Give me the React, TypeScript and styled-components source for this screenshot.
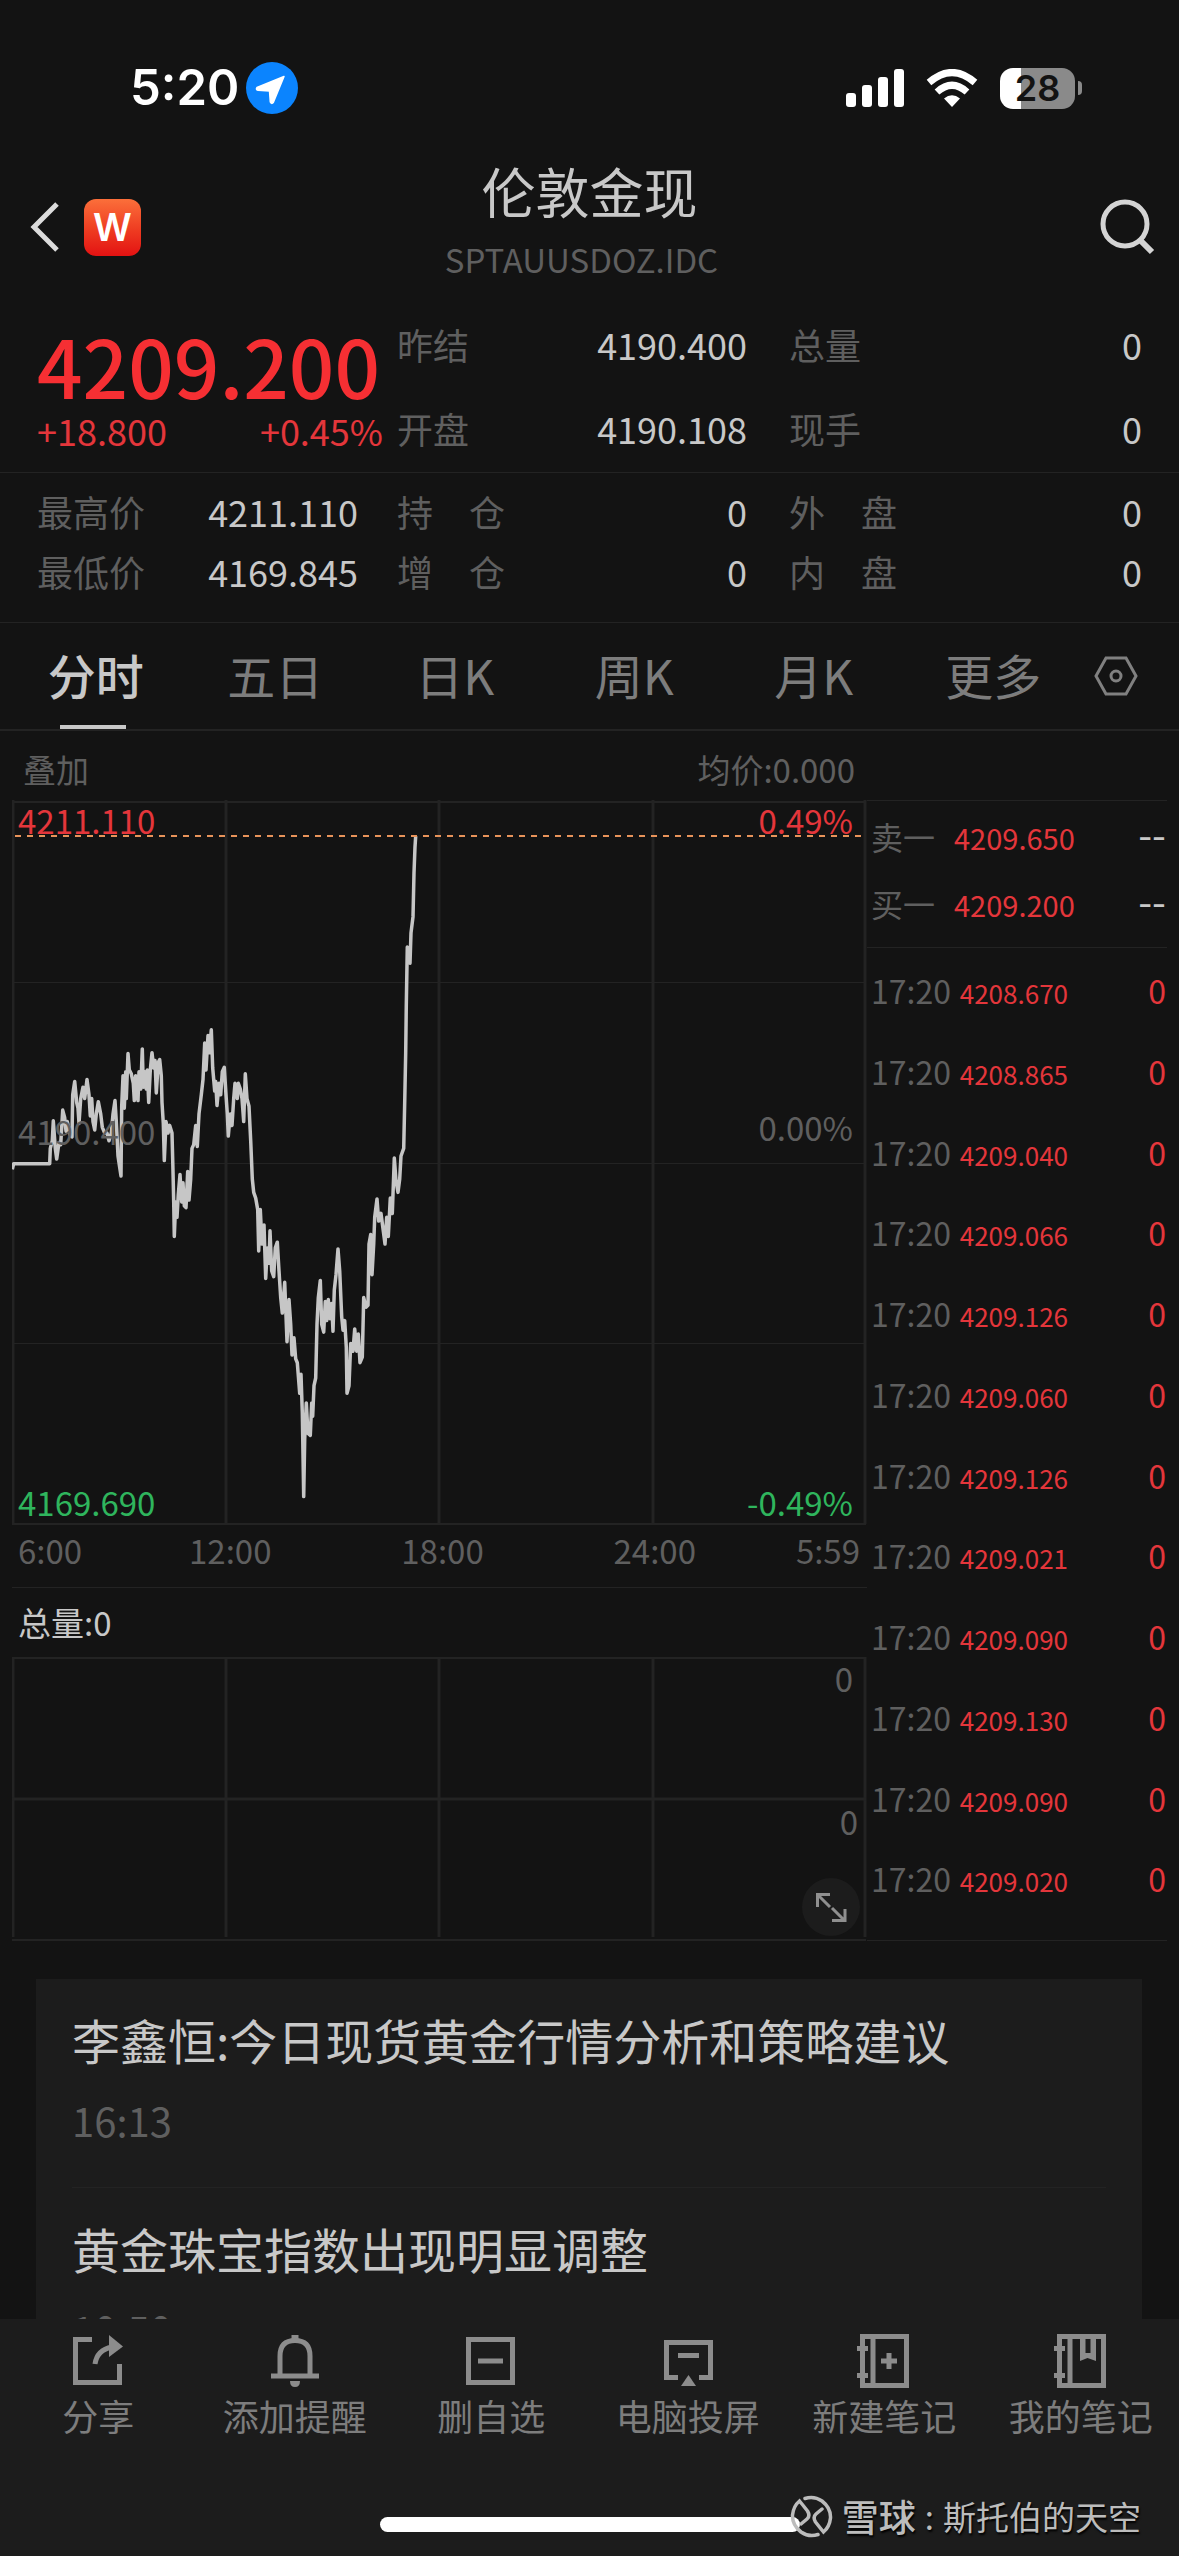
import React from "react";
import styled, { createGlobalStyle } from "styled-components";

const color = {
  page: "#131313",
  panel: "#1c1c1c",
  line: "#232323",
  text: "#c8c8c8",
  muted: "#5f5f5f",
  tab: "#7d7d7d",
  icon: "#8c8c8c",
  up: "#e4363b",
  upStrong: "#f62f33",
  down: "#2fb55d",
  latest: "#e8935a",
};

const GlobalStyle = createGlobalStyle`
  *, *::before, *::after { box-sizing: border-box; }
  body {
    margin: 0;
    background: ${color.page};
    color: ${color.text};
    font-family: "Noto Sans CJK SC", "Noto Sans", sans-serif;
  }
  button {
    appearance: none;
    border: 0;
    margin: 0;
    padding: 0;
    background: none;
    color: inherit;
    font: inherit;
    cursor: pointer;
  }
  h1, h2, p, dl, dt, dd, ul { margin: 0; padding: 0; font-weight: 400; }
  svg { display: block; }
`;

const Screen = styled.div`
  display: flex;
  flex-direction: column;
  height: 100vh;
  overflow: hidden;
`;

const Content = styled.main`
  flex: 1;
  min-height: 0;
  overflow: hidden;
`;

/* ---------- status bar ---------- */

const StatusBar = styled.div`
  display: flex;
  align-items: center;
  justify-content: space-between;
  height: 152px;
  padding: 24px 97px 0 130px;
  font-family: Inter, sans-serif;
  color: #fff;
`;

const StatusGroup = styled.div<{ $gap: number }>`
  display: flex;
  align-items: center;
  gap: ${(p) => p.$gap}px;
`;

const Clock = styled.span`
  font-size: 49px;
  line-height: 56px;
  font-weight: 600;
`;

const Battery = styled.div`
  display: flex;
  align-items: center;
  gap: 3px;
  &::after {
    content: "";
    width: 4px;
    height: 14px;
    border-radius: 0 4px 4px 0;
    background: #8a8a8a;
  }
`;

const BatteryLevel = styled.span`
  width: 75px;
  height: 41px;
  border-radius: 13px;
  background: linear-gradient(90deg, #fff 28%, #8a8a8a 28%);
  color: #131313;
  font-size: 36px;
  line-height: 41px;
  font-weight: 600;
  text-align: center;
`;

/* ---------- title bar ---------- */

const TitleBar = styled.header`
  display: grid;
  grid-template-columns: 1fr auto 1fr;
  align-items: center;
  height: 150px;
  padding: 0 24px;
`;

const BackGroup = styled.div`
  display: flex;
  align-items: center;
  gap: 24px;
  padding-left: 6px;
`;

const AppBadge = styled.span`
  display: flex;
  align-items: center;
  justify-content: center;
  width: 57px;
  height: 57px;
  border-radius: 12px;
  background: linear-gradient(#fb6f3a, #ee3b21 55%, #e31212);
  color: #fff;
  font: 600 38px/57px Inter, sans-serif;
`;

const TitleBlock = styled.div`
  padding-bottom: 12px;
  text-align: center;
`;

const Title = styled.h1`
  font-size: 54px;
  line-height: 64px;
`;

const Symbol = styled.p`
  margin-top: 12px;
  padding-right: 16px;
  color: ${color.muted};
  font-size: 33px;
  line-height: 48px;
`;

const SearchButton = styled.button`
  justify-self: end;
`;

/* ---------- quote figures ---------- */

const Figures = styled.section<{ $pad: string }>`
  display: grid;
  grid-template-columns: minmax(0, 360fr) minmax(0, 392fr) minmax(0, 353fr);
  padding: ${(p) => p.$pad};
  border-bottom: 1px solid ${color.line};
`;

const FigureColumn = styled.dl<{ $row: number; $inset: number }>`
  padding-right: ${(p) => p.$inset}px;
  font-size: 36px;
  line-height: ${(p) => p.$row}px;
`;

const Figure = styled.div`
  display: flex;
  justify-content: space-between;
  white-space: pre;
  dt { color: ${color.muted}; }
`;

const PriceBlock = styled.div`
  padding: 20px 14px 0 0;
`;

const Price = styled.p`
  color: ${color.upStrong};
  font-size: 80px;
  line-height: 84px;
  font-weight: 500;
`;

const Change = styled.p`
  display: flex;
  justify-content: space-between;
  color: ${color.up};
  font-size: 36px;
  line-height: 48px;
`;

/* ---------- period tabs ---------- */

const Tabs = styled.nav`
  display: flex;
  align-items: stretch;
  height: 108px;
  padding: 0 30px 0 6px;
  border-bottom: 2px solid ${color.line};
`;

const Tab = styled.button<{ $active?: boolean }>`
  position: relative;
  flex: 1;
  padding-bottom: 5px;
  color: ${(p) => (p.$active ? color.text : color.tab)};
  font-size: 48px;
  font-weight: ${(p) => (p.$active ? 500 : 400)};
  &::after {
    content: "";
    position: absolute;
    bottom: 0;
    left: calc(50% - 36px);
    width: 66px;
    height: 4px;
    background: ${(p) => (p.$active ? color.text : "transparent")};
  }
`;

const TabSettings = styled.button`
  display: flex;
  align-items: center;
  justify-content: center;
  width: 66px;
`;

/* ---------- charts and order book ---------- */

const Market = styled.section`
  display: grid;
  grid-template-columns: minmax(0, 855fr) minmax(0, 300fr);
  padding: 0 12px;
`;

const Legend = styled.div<{ $bright?: boolean }>`
  display: flex;
  justify-content: space-between;
  height: 69px;
  padding: ${(p) => (p.$bright ? "0 12px 0 6px" : "4px 12px 0 11px")};
  color: ${(p) => (p.$bright ? color.text : color.muted)};
  font-size: 33px;
  line-height: 68px;
`;

const Plot = styled.div<{ $height: number }>`
  position: relative;
  height: ${(p) => p.$height}px;
`;

const PlotCanvas = styled.svg`
  width: 100%;
  height: 100%;
`;

const AxisLabel = styled.span<{ $top: number; $side: "left" | "right"; $inset: number; $tone: string }>`
  position: absolute;
  top: ${(p) => p.$top}px;
  ${(p) => p.$side}: ${(p) => p.$inset}px;
  color: ${(p) => p.$tone};
  font-size: 33px;
  line-height: 40px;
`;

const TimeAxis = styled.div`
  display: grid;
  grid-template-columns: 1fr 2fr 2fr 2fr 1fr;
  height: 63px;
  padding-left: 6px;
  border-bottom: 1px solid ${color.line};
  color: ${color.muted};
  font-size: 33px;
  line-height: 50px;
  text-align: center;
  white-space: nowrap;
  span:first-child { text-align: left; }
  span:last-child {
    justify-self: end;
    padding-right: 7px;
  }
`;

const ExpandButton = styled.button`
  position: absolute;
  right: 7px;
  bottom: 5px;
  width: 58px;
  height: 58px;
  border-radius: 50%;
  background: ${color.panel};
`;

const Book = styled.aside`
  display: flex;
  flex-direction: column;
  margin-top: 69px;
  border-top: 1px solid ${color.line};
  border-bottom: 1px solid ${color.line};
`;

const BookSection = styled.div<{ $pad: string; $ruled?: boolean }>`
  padding: ${(p) => p.$pad};
  border-bottom: ${(p) => (p.$ruled ? `1px solid ${color.line}` : "0")};
`;

const BookTable = styled.table<{ $height: number; $row: number; $price: number }>`
  width: 100%;
  height: ${(p) => p.$height}px;
  table-layout: fixed;
  border-collapse: collapse;
  font-size: 32px;
  line-height: ${(p) => p.$row}px;
  th, td {
    padding: 0;
    font-weight: 400;
    vertical-align: baseline;
    text-align: right;
    white-space: nowrap;
  }
  th {
    padding-left: 4px;
    color: ${color.muted};
    text-align: left;
  }
  td {
    color: ${color.up};
    font-size: ${(p) => p.$price}px;
  }
  td:last-child {
    padding-right: 1px;
    font-size: 32px;
  }
`;

const BookColumn = styled.col<{ $share: number }>`
  width: ${(p) => p.$share}%;
`;

const Unfilled = styled.span`
  color: ${color.text};
  font-size: 40px;
  line-height: 40px;
`;

/* ---------- news ---------- */

const News = styled.ul`
  margin: 38px 37px 0 36px;
  padding: 0 36px;
  background: ${color.panel};
  list-style: none;
`;

const NewsItem = styled.li`
  padding: 28px 0 42px;
  border-bottom: 1px solid #232323;
`;

const NewsTitle = styled.h2`
  font-size: 48px;
  line-height: 64px;
`;

const NewsTime = styled.p`
  margin-top: 24px;
  color: ${color.muted};
  font-size: 40px;
  line-height: 50px;
`;

/* ---------- bottom bar ---------- */

const BottomBar = styled.footer`
  position: relative;
  display: flex;
  flex-direction: column;
  justify-content: space-between;
  height: 237px;
  padding: 14px 0 24px;
  background: ${color.panel};
`;

const Actions = styled.div`
  display: grid;
  grid-template-columns: repeat(6, minmax(0, 1fr));
`;

const Action = styled.button`
  display: flex;
  flex-direction: column;
  align-items: center;
  gap: 4px;
  color: ${color.tab};
  font-size: 36px;
  line-height: 44px;
  white-space: nowrap;
`;

const HomeIndicator = styled.div`
  align-self: center;
  width: 420px;
  height: 15px;
  border-radius: 8px;
  background: #fff;
`;

const Watermark = styled.div`
  position: absolute;
  right: 38px;
  bottom: 15px;
  display: flex;
  align-items: center;
  gap: 9px;
  color: #bcbcbc;
  font-size: 33px;
  line-height: 50px;
  text-shadow: 1px 2px 2px #000;
`;

const Brand = styled.strong`
  font-size: 37px;
  font-weight: 500;
`;

/* ---------- icons ---------- */

const LocationIcon = () => (
  <svg width="52" height="52" viewBox="0 0 52 52" aria-hidden="true">
    <circle cx="26" cy="26" r="26" fill="#0b84fe" />
    <path d="M38 14.5 L11 25.5 Q9.500 27.500 12 28.300 L23.500 29 L24.300 40 Q25.500 42.500 27.300 40.500 Z" fill="#fff" stroke="#fff" strokeWidth="1.500" strokeLinejoin="round" />
  </svg>
);

const SignalIcon = () => (
  <svg width="58" height="38" viewBox="0 0 58 38" fill="#fff" aria-hidden="true">
    <rect x="0" y="24" width="10" height="14" rx="3" />
    <rect x="16" y="16" width="10" height="22" rx="3" />
    <rect x="32" y="8" width="10" height="30" rx="3" />
    <rect x="48" y="0" width="10" height="38" rx="3" />
  </svg>
);

const WifiIcon = () => (
  <svg width="52" height="38" viewBox="0 0 52 38" fill="none" stroke="#fff" strokeWidth="7" aria-hidden="true">
    <path d="M3 13.500 Q26 -6.500 49 13.500" />
    <path d="M11 23 Q26 9.500 41 23" />
    <path d="M26 38 L18 29.500 Q26 23 34 29.500 Z" fill="#fff" stroke="none" />
  </svg>
);

const BackIcon = () => (
  <svg width="30" height="50" viewBox="0 0 30 50" fill="none" stroke="#dcdcdc" strokeWidth="5" aria-hidden="true">
    <path d="M27 2 L4 25 L27 48" />
  </svg>
);

const SearchIcon = () => (
  <svg width="56" height="56" viewBox="0 0 56 56" fill="none" stroke="#d4d4d4" strokeWidth="5" aria-hidden="true">
    <circle cx="26" cy="25" r="22" />
    <path d="M41 41 L53 53" strokeWidth="6" />
  </svg>
);

const HexIcon = () => (
  <svg width="44" height="40" viewBox="0 0 44 40" fill="none" stroke="#808080" strokeWidth="3" aria-hidden="true">
    <path d="M12 2 H32 L42 20 L32 38 H12 L2 20 Z" />
    <circle cx="22" cy="20" r="5" />
  </svg>
);

const ExpandIcon = () => (
  <svg width="58" height="58" viewBox="0 0 58 58" fill="none" stroke="#8f8f8f" strokeWidth="3" aria-hidden="true">
    <path d="M15.500 29 V16.500 H28 M16 17 L28 29 M43 31 V42.500 H30 M30 30 L42 42" />
  </svg>
);

const ActionIcon = ({ children }: { children: React.ReactNode }) => (
  <svg width="56" height="56" viewBox="0 0 56 56" fill="none" stroke={color.icon} strokeWidth="5" aria-hidden="true">
    {children}
  </svg>
);

const NotebookFrame = () => (
  <>
    <rect x="6.500" y="3.500" width="44" height="49" />
    <path d="M17 4 V52" />
    <path d="M1 15.500 H12 M1 42.500 H12" />
  </>
);

const actions = [
  {
    label: "分享",
    icon: (
      <>
        <path d="M22 6.500 H5.500 V49.500 H49.500 V31" />
        <path d="M25 31 Q27 17 42 14" />
        <path d="M39 2 L53 13.500 L39 24 Z" fill={color.icon} stroke="none" />
      </>
    ),
  },
  {
    label: "添加提醒",
    icon: (
      <>
        <path d="M13 43 V23 Q13 7.500 28 7.500 Q43 7.500 43 23 V43" />
        <path d="M4 43 H52" />
        <path d="M28 2 V8" strokeWidth="7" />
        <path d="M23 48 H33 Q33 54 28 54 Q23 54 23 48 Z" fill={color.icon} stroke="none" />
      </>
    ),
  },
  {
    label: "删自选",
    icon: (
      <>
        <rect x="5.500" y="6.500" width="44" height="43" />
        <path d="M15 28 H40" />
      </>
    ),
  },
  {
    label: "电脑投屏",
    icon: (
      <>
        <path d="M18 44.500 H6.500 V9.500 H50.500 V44.500 H39" />
        <path d="M18 22.500 H39" />
        <path d="M28.500 42 L36 53 H21 Z" fill={color.icon} stroke="none" />
      </>
    ),
  },
  {
    label: "新建笔记",
    icon: (
      <>
        <NotebookFrame />
        <path d="M25 28 H41 M33 20 V36" />
      </>
    ),
  },
  {
    label: "我的笔记",
    icon: (
      <>
        <NotebookFrame />
        <path d="M27 4 V28 L34.500 25 L43 28 V4 H37.500 V20 H32.500 V4 Z" fill={color.icon} stroke="none" />
      </>
    ),
  },
];

const XueqiuLogo = () => (
  <svg width="43" height="43" viewBox="0 0 43 43" fill="none" stroke="#bcbcbc" strokeWidth="3.500" strokeLinecap="round" aria-hidden="true">
    <path d="M15 3.500 Q24 0.500 32 6 Q41 13 40.500 23 Q39.500 32 33.500 37 Q31 34 25.500 27 Q22.500 22 26 19 L32 14" />
    <path d="M28 39.500 Q19 42.500 11 37 Q2 30 2.500 20 Q3.500 11 9.500 6 Q12 9 17.500 16 Q20.500 21 17 24 L11 29" />
  </svg>
);

/* ---------- price line ---------- */

/* Time runs 3 units per pixel from the left axis, price about 2.6 units per pixel below the first quarter line. */
const samples: [number, number][] = [
  [-2, 495], [2, 480], [110, 480], [112, 440], [118, 420], [121, 368], [127, 440], [131, 468], [138, 425], [143, 430],
  [149, 340], [155, 360], [159, 395], [163, 370], [172, 405], [177, 410], [179, 300], [185, 265], [191, 320], [195, 335],
  [198, 375], [203, 310], [210, 280], [215, 310], [222, 260], [228, 300], [232, 355], [236, 310], [240, 370], [245, 392],
  [250, 350], [256, 318], [263, 350], [268, 385], [275, 400], [282, 400], [288, 420], [295, 400], [300, 350], [306, 315],
  [310, 370], [315, 460], [320, 490], [324, 512], [326, 330], [330, 250], [334, 335], [338, 240], [340, 310], [345, 192],
  [349, 235], [355, 245], [361, 270], [364, 315], [368, 250], [375, 315], [378, 240], [383, 285], [388, 180], [391, 280],
  [395, 240], [400, 285], [403, 235], [407, 320], [412, 235], [417, 190], [422, 230], [426, 210], [430, 295], [436, 215],
  [440, 208], [445, 250], [447, 320], [451, 375], [454, 472], [459, 370], [465, 400], [470, 380], [477, 400], [480, 500],
  [482, 580], [484, 670], [488, 580], [492, 620], [496, 560], [501, 508], [506, 580], [510, 530], [514, 590], [519, 595],
  [524, 500], [528, 575], [533, 520], [537, 440], [542, 430], [548, 380], [553, 435], [558, 350], [565, 300], [570, 260],
  [575, 165], [579, 235], [585, 145], [589, 190], [595, 130], [599, 230], [605, 290], [608, 265], [612, 328], [618, 270],
  [623, 300], [628, 240], [634, 228], [639, 300], [643, 350], [646, 408], [652, 350], [657, 380], [662, 310], [666, 270],
  [673, 310], [676, 270], [682, 285], [687, 310], [692, 370], [697, 245], [702, 310], [708, 330], [713, 420], [718, 520],
  [722, 555], [728, 570], [734, 600], [737, 708], [742, 600], [747, 690], [753, 640], [758, 780], [763, 700], [768, 740],
  [771, 655], [776, 760], [782, 775], [787, 700], [793, 685], [798, 760], [803, 830], [808, 870], [815, 790], [822, 945],
  [828, 835], [833, 900], [837, 980], [843, 935], [848, 990], [853, 1000], [860, 1080], [864, 1030], [868, 1130], [872, 1350],
  [875, 1200], [880, 1105], [885, 1185], [892, 1190], [896, 1105], [899, 1140], [903, 1060], [908, 1040], [912, 900], [916, 830],
  [922, 785], [926, 900], [932, 920], [937, 840], [941, 890], [946, 835], [951, 885], [956, 845], [960, 918], [964, 810],
  [969, 770], [975, 703], [980, 760], [986, 880], [990, 915], [995, 890], [1000, 960], [1002, 1080], [1008, 1060], [1013, 950],
  [1020, 970], [1025, 912], [1031, 970], [1036, 925], [1041, 1000], [1048, 985], [1052, 830], [1059, 855], [1065, 850], [1068, 690],
  [1073, 665], [1077, 770], [1082, 690], [1085, 620], [1092, 572], [1097, 630], [1104, 610], [1110, 650], [1116, 690], [1121, 620],
  [1126, 670], [1132, 570], [1138, 610], [1144, 465], [1149, 525], [1155, 555], [1160, 520], [1164, 460], [1172, 440], [1175, 320],
  [1178, 190], [1180, 65], [1183, -86], [1191, -44], [1194, -123], [1200, -165], [1203, -280], [1206, -348], [1208, -376],
];

const pricePath = samples
  .map(([t, p]) => `${(1 + t / 3).toFixed(1)},${(180 + p / 2.613).toFixed(1)}`)
  .join(" ");

const columnsX = [1, 214, 427, 641, 853];

const PriceChart = () => (
  <PlotCanvas viewBox="0 0 855 725" preserveAspectRatio="none" fill="none" role="img" aria-label="分时走势">
    <g stroke={color.line}>
      {columnsX.map((x) => (
        <line key={x} x1={x} x2={x} y1="0" y2="724" strokeWidth="3" />
      ))}
      {[2, 724].map((y) => (
        <line key={y} x1="0" x2="854" y1={y} y2={y} strokeWidth="2" />
      ))}
      {[183, 364, 544].map((y) => (
        <line key={y} x1="0" x2="854" y1={y - 0.5} y2={y - 0.5} strokeWidth="1" />
      ))}
    </g>
    <polyline points={pricePath} stroke="#c6c6c6" strokeWidth="3.500" strokeLinejoin="round" />
    <line x1="3" x2="851" y1="36" y2="36" stroke={color.latest} strokeWidth="2" strokeDasharray="6 6" />
  </PlotCanvas>
);

const VolumeChart = () => (
  <PlotCanvas viewBox="0 0 855 285" preserveAspectRatio="none" fill="none" stroke={color.line} role="img" aria-label="成交量">
    {columnsX.map((x) => (
      <line key={x} x1={x} x2={x} y1="0" y2="281" strokeWidth="3" />
    ))}
    <path d="M0 1 H854 M0 284 H854" strokeWidth="2" />
    <path d="M0 142.500 H854" strokeWidth="3" />
  </PlotCanvas>
);

/* ---------- data ---------- */

const bids = [
  ["卖一", "4209.650"],
  ["买一", "4209.200"],
];

const ticks = [
  "4208.670", "4208.865", "4209.040", "4209.066", "4209.126", "4209.060",
  "4209.126", "4209.021", "4209.090", "4209.130", "4209.090", "4209.020",
];

const FigureList = ({ rows, row, inset }: { rows: [string, string][]; row: number; inset: number }) => (
  <FigureColumn $row={row} $inset={inset}>
    {rows.map(([label, value]) => (
      <Figure key={label}>
        <dt>{label}</dt>
        <dd>{value}</dd>
      </Figure>
    ))}
  </FigureColumn>
);

export default function App() {
  return (
    <Screen lang="zh-CN">
      <GlobalStyle />
      <StatusBar>
        <StatusGroup $gap={7}>
          <Clock>5:20</Clock>
          <LocationIcon />
        </StatusGroup>
        <StatusGroup $gap={22}>
          <SignalIcon />
          <WifiIcon />
          <Battery>
            <BatteryLevel>28</BatteryLevel>
          </Battery>
        </StatusGroup>
      </StatusBar>

      <TitleBar>
        <BackGroup>
          <button aria-label="返回">
            <BackIcon />
          </button>
          <AppBadge>W</AppBadge>
        </BackGroup>
        <TitleBlock>
          <Title>伦敦金现</Title>
          <Symbol>SPTAUUSDOZ.IDC</Symbol>
        </TitleBlock>
        <SearchButton aria-label="搜索">
          <SearchIcon />
        </SearchButton>
      </TitleBar>

      <Content>
        <Figures $pad="0 37px 2px">
          <PriceBlock>
            <Price>4209.200</Price>
            <Change>
              <span>+18.800</span>
              <span>+0.45%</span>
            </Change>
          </PriceBlock>
          <FigureList row={84} inset={42} rows={[["昨结", "4190.400"], ["开盘", "4190.108"]]} />
          <FigureList row={84} inset={0} rows={[["总量", "0"], ["现手", "0"]]} />
        </Figures>
        <Figures $pad="8px 37px 21px">
          <FigureList row={60} inset={39} rows={[["最高价", "4211.110"], ["最低价", "4169.845"]]} />
          <FigureList row={60} inset={42} rows={[["持　仓", "0"], ["增　仓", "0"]]} />
          <FigureList row={60} inset={0} rows={[["外　盘", "0"], ["内　盘", "0"]]} />
        </Figures>

        <Tabs>
          {["分时", "五日", "日K", "周K", "月K", "更多"].map((name, i) => (
            <Tab key={name} $active={i === 0}>
              {name}
            </Tab>
          ))}
          <TabSettings aria-label="设置">
            <HexIcon />
          </TabSettings>
        </Tabs>

        <Market>
          <div>
            <Legend>
              <span>叠加</span>
              <span>均价:0.000</span>
            </Legend>
            <Plot $height={725}>
              <PriceChart />
              <AxisLabel $top={0} $side="left" $inset={6} $tone={color.up}>4211.110</AxisLabel>
              <AxisLabel $top={0} $side="right" $inset={14} $tone={color.up}>0.49%</AxisLabel>
              <AxisLabel $top={311} $side="left" $inset={6} $tone={color.muted}>4190.400</AxisLabel>
              <AxisLabel $top={307} $side="right" $inset={14} $tone={color.muted}>0.00%</AxisLabel>
              <AxisLabel $top={682} $side="left" $inset={6} $tone={color.down}>4169.690</AxisLabel>
              <AxisLabel $top={682} $side="right" $inset={14} $tone={color.down}>-0.49%</AxisLabel>
            </Plot>
            <TimeAxis>
              <span>6:00</span>
              <span>12:00</span>
              <span>18:00</span>
              <span>24:00</span>
              <span>5:59</span>
            </TimeAxis>
            <Legend $bright>
              <span>总量:0</span>
            </Legend>
            <Plot $height={284}>
              <VolumeChart />
              <AxisLabel $top={1} $side="right" $inset={14} $tone={color.muted}>0</AxisLabel>
              <AxisLabel $top={144} $side="right" $inset={9} $tone={color.muted}>0</AxisLabel>
              <ExpandButton aria-label="全屏">
                <ExpandIcon />
              </ExpandButton>
            </Plot>
          </div>

          <Book>
            <BookSection $pad="4px 0 8px" $ruled>
              <BookTable $height={134} $row={62} $price={29}>
                <colgroup>
                  <BookColumn $share={29} />
                  <BookColumn $share={38} />
                  <BookColumn $share={33} />
                </colgroup>
                <tbody>
                  {bids.map(([side, price]) => (
                    <tr key={side}>
                      <th scope="row">{side}</th>
                      <td>{price}</td>
                      <td>
                        <Unfilled>--</Unfilled>
                      </td>
                    </tr>
                  ))}
                </tbody>
              </BookTable>
            </BookSection>
            <BookSection $pad="4px 0 0">
              <BookTable $height={969} $row={76} $price={26}>
                <colgroup>
                  <BookColumn $share={29} />
                  <BookColumn $share={38} />
                  <BookColumn $share={33} />
                </colgroup>
                <tbody>
                  {ticks.map((price, i) => (
                    <tr key={i}>
                      <th scope="row">17:20</th>
                      <td>{price}</td>
                      <td>0</td>
                    </tr>
                  ))}
                </tbody>
              </BookTable>
            </BookSection>
          </Book>
        </Market>

        <News>
          <NewsItem>
            <NewsTitle>李鑫恒:今日现货黄金行情分析和策略建议</NewsTitle>
            <NewsTime>16:13</NewsTime>
          </NewsItem>
          <NewsItem>
            <NewsTitle>黄金珠宝指数出现明显调整</NewsTitle>
            <NewsTime>10:50</NewsTime>
          </NewsItem>
        </News>
      </Content>

      <BottomBar>
        <Actions>
          {actions.map(({ label, icon }) => (
            <Action key={label}>
              <ActionIcon>{icon}</ActionIcon>
              {label}
            </Action>
          ))}
        </Actions>
        <HomeIndicator />
        <Watermark>
          <XueqiuLogo />
          <Brand>雪球</Brand>
          <span>:</span>
          <span>斯托伯的天空</span>
        </Watermark>
      </BottomBar>
    </Screen>
  );
}
